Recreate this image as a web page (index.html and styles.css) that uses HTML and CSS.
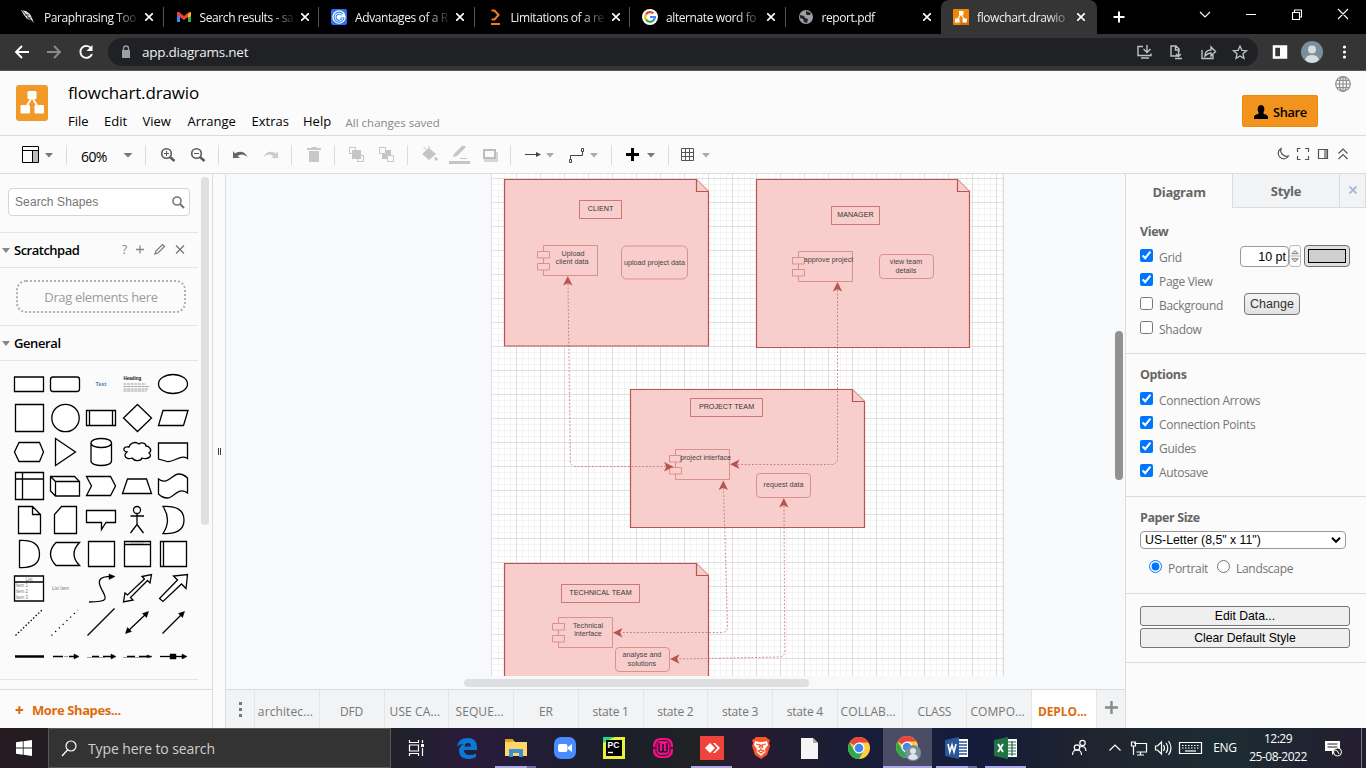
FILE: index.html
```html
<!DOCTYPE html>
<html lang="en">
<head>
<meta charset="utf-8">
<title>flowchart.drawio</title>
<link rel="stylesheet" href="styles.css">
</head>
<body>
<div class="screen">
<header class="tabstrip">
  <div class="tab"><svg class="fav" viewBox="0 0 16 16"><path d="M1 1l5 1 4 3 2 4 2 5-3-3-4-1-3-4z" fill="#ddd"/><path d="M2 1l12 14M5 6l4 0M7 9h4" stroke="#000" stroke-width=".7"/></svg><span class="tt">Paraphrasing Too</span><svg class="x" viewBox="0 0 8 8"><path d="M0 0l8 8M8 0l-8 8"/></svg></div>
  <div class="tab"><svg class="fav" viewBox="0 0 16 16"><path d="M1 3v10h3V6z" fill="#4285f4"/><path d="M15 3v10h-3V6z" fill="#34a853"/><path d="M1 3h2l5 4 5-4h2v3L8 11 1 6z" fill="#ea4335"/><path d="M12 5l3-2v4l-3 2z" fill="#fbbc04"/></svg><span class="tt">Search results - sa</span><svg class="x" viewBox="0 0 8 8"><path d="M0 0l8 8M8 0l-8 8"/></svg></div>
  <div class="tab"><svg class="fav" viewBox="0 0 16 16"><rect width="16" height="16" rx="2" fill="#2f6fed"/><circle cx="8" cy="8" r="6.700" fill="#fff"/><path d="M12 5a5 5 0 1 0 1 4H9M10.500 6.500a3 3 0 1 0 0 3.500" fill="none" stroke="#2f86ed" stroke-width="1.100"/></svg><span class="tt">Advantages of a R</span><svg class="x" viewBox="0 0 8 8"><path d="M0 0l8 8M8 0l-8 8"/></svg></div>
  <div class="tab"><svg class="fav" viewBox="0 0 16 16"><path d="M4.500 1.500h3l4 4.500-4 4.500h-3M4 15h9" fill="none" stroke="#f47b20" stroke-width="2"/></svg><span class="tt">Limitations of a re</span><svg class="x" viewBox="0 0 8 8"><path d="M0 0l8 8M8 0l-8 8"/></svg></div>
  <div class="tab"><svg class="fav" viewBox="0 0 16 16"><circle cx="8" cy="8" r="8" fill="#fff"/><g fill="none" stroke-width="2.200"><path d="M4 5.300a5 5 0 0 1 7.500-1" stroke="#ea4335"/><path d="M4 5.300a5 5 0 0 0 0 5.400" stroke="#fbbc04"/><path d="M4 10.700a5 5 0 0 0 7.300.9" stroke="#34a853"/><path d="M8 8h5a5 5 0 0 1-1.700 3.600" stroke="#4285f4"/></g></svg><span class="tt">alternate word fo</span><svg class="x" viewBox="0 0 8 8"><path d="M0 0l8 8M8 0l-8 8"/></svg></div>
  <div class="tab nosep"><svg class="fav" viewBox="0 0 16 16"><circle cx="8" cy="8" r="7" fill="#9aa0a6"/><path d="M2 6l4 1 1 2 3 1-1 4-3-1-1-3-3-1zM8 2l5 2-1 2H9L8 5z" fill="#222"/></svg><span class="tt">report.pdf</span><svg class="x" viewBox="0 0 8 8"><path d="M0 0l8 8M8 0l-8 8"/></svg></div>
  <div class="tab active"><svg class="fav" viewBox="0 0 16 16"><rect width="16" height="16" rx="1" fill="#f08705"/><path d="M10 6l6 6v4H7z" fill="#df6c0c"/><path d="M8 5L4 11M8 5l4 6" stroke="#fff" stroke-width="1.300"/><path d="M6 2h4.500v4H6zM2 9.500h4.500v4H2zM9.500 9.500H14v4H9.500z" fill="#fff"/></svg><span class="tt">flowchart.drawio</span><svg class="x" viewBox="0 0 8 8"><path d="M0 0l8 8M8 0l-8 8"/></svg></div>
  <svg class="winctl" viewBox="1097 0 269 34"><g fill="none" stroke="#fff"><path d="M1119 11.500v11M1113.500 17h11" stroke-width="2"/><path d="M1200 12l5 5 5-5M1246 14.500h10M1292.500 12.500h7v7h-7zM1294.500 12v-2h7v7h-2M1338 9l10 10M1348 9l-10 10" stroke-width="1.100"/></g></svg>
</header>
<div class="urlbar">
  <svg class="nav" viewBox="0 34 108 37"><g fill="none" stroke-width="1.900"><path d="M29 52H17M22 46l-6 6 6 6" stroke="#fff"/><path d="M47 52h12M54 46l6 6-6 6" stroke="#8a8a8a"/><path d="M91 48a6 6 0 1 0 1 6" stroke="#fff"/></g><path d="M92.500 45v6h-6z" fill="#fff"/></svg>
  <div class="omni"><svg class="lock" viewBox="0 0 10 14"><path d="M1 5h8v8H1z" fill="#9aa0a6"/><path d="M2.500 6V3.500a2.500 2.500 0 0 1 5 0V6" fill="none" stroke="#9aa0a6" stroke-width="1.300"/></svg><span>app.diagrams.net</span>
  <svg class="omniic" viewBox="1130 38 128 28"><g fill="none" stroke="#bfc1c5" stroke-width="1.400"><path d="M1143 46.500h-5v9h13v-2M1147 45v7M1143.500 49l3.500 3.500 3.500-3.500M1141 58h8"/><path d="M1178 56h-7V46h5l3 3v3M1175.500 46v4h4M1178.500 51v5M1176 54l2.500 2.500L1181 54M1175 58.500h7"/><path d="M1202 50v8.500h11V55M1205 56q0-6 6-6v-3l4.500 4.500L1211 56v-3q-3 0-6 3z"/><path d="M1240 46l1.900 4.300 4.600.4-3.500 3.100 1 4.500-4-2.400-4 2.400 1-4.500-3.500-3.100 4.600-.4z" stroke-width="1.300"/></g></svg></div>
  <svg class="barright" viewBox="1258 34 108 37"><path d="M1274 46.500h12v11h-12z" fill="none" stroke="#fff" stroke-width="2.500"/><path d="M1280 46h6v12h-6z" fill="#fff"/><circle cx="1312" cy="52" r="11" fill="#78909c"/><circle cx="1312" cy="49.500" r="4" fill="#d6dde1"/><path d="M1305 60q1-5 7-5t7 5q-3 3-7 3t-7-3z" fill="#d6dde1"/><g fill="#fff"><circle cx="1344.500" cy="47" r="1.600"/><circle cx="1344.500" cy="52" r="1.600"/><circle cx="1344.500" cy="57" r="1.600"/></g></svg>
</div>
<div class="apphead">
  <svg class="logo" viewBox="0 0 32 36"><rect width="32" height="36" rx="3" fill="#f2992b"/><path d="M16 12L9 24M16 12l7 12" stroke="#fff" stroke-width="1.800"/><rect x="11.500" y="6" width="9" height="8" rx="1.300" fill="#fff"/><rect x="4.500" y="20" width="9.500" height="8.500" rx="1.300" fill="#fff"/><rect x="18.500" y="20" width="9.500" height="8.500" rx="1.300" fill="#fff"/></svg>
  <div class="names"><div class="fname">flowchart.drawio</div>
  <nav class="menu"><span class="m1">File</span><span class="m2">Edit</span><span class="m3">View</span><span class="m4">Arrange</span><span class="m5">Extras</span><span class="m6">Help</span><span class="saved">All changes saved</span></nav></div>
  <div class="share"><svg viewBox="0 0 14 14"><path d="M0 14v-2q0-2 4-3 1-.5.500-1.500Q3 5 4 2q1-2 3-2t3 2q1 3-.5 5.500Q9 8.500 10 9q4 1 4 3v2z"/></svg>Share</div>
  <svg class="globe" viewBox="0 0 16 16"><g fill="none" stroke="#8f8f8f" stroke-width="1.200"><circle cx="8" cy="8" r="7.300"/><ellipse cx="8" cy="8" rx="3.600" ry="7.300"/><path d="M8 .7v14.600M.7 8h14.600M1.800 4.300h12.400M1.800 11.700h12.400"/></g></svg>
</div>
<div class="toolbar">
  <div class="tg w67"><svg width="66" height="37" viewBox="0 136 66 37"><path d="M22.500 146.500h16v16h-16zM22 150.500h16M32.500 150.500v12" fill="none" stroke="#000"/><path d="M33 151h5v11h-5z" fill="#bbb"/><path d="M45 153h8l-4 4.500z" fill="#777"/></svg></div>
  <div class="tg w79"><span class="zoom">60%</span><svg width="10" height="6" viewBox="0 0 10 6"><path d="M.5 1h9L5 5.500z" fill="#777"/></svg></div>
  <div class="tg w73"><svg width="72" height="37" viewBox="146 136 72 37"><g fill="none" stroke="#5a5a5a"><circle cx="166.500" cy="153.500" r="4.800" stroke-width="1.600"/><path d="M170 157l4.500 4" stroke-width="2.400"/><path d="M164 153.500h5M166.500 151v5"/><circle cx="196.500" cy="153.500" r="4.800" stroke-width="1.600"/><path d="M200 157l4.500 4" stroke-width="2.400"/><path d="M194 153.500h5"/></g></svg></div>
  <div class="tg w73"><svg width="72" height="37" viewBox="219 136 72 37"><path d="M233 151v7h7l-2.500-2q5-3.500 10 1-3-6-9-5-2 .3-3.500 1.500z" fill="#666"/><path d="M278 151v7h-7l2.500-2q-5-3.500-10 1 3-6 9-5 2 .3 3.500 1.500z" fill="#ccc"/></svg></div>
  <div class="tg w43"><svg width="42" height="37" viewBox="292 136 42 37"><path d="M307 148h4.500v-1h5v1h4.500v2h-14zM309 151h10v11h-10z" fill="#c8c8c8"/></svg></div>
  <div class="tg w73"><svg width="72" height="37" viewBox="335 136 72 37"><g fill="none" stroke="#c5c5c5"><path d="M349.500 147.500h6v6h-6zM357.500 155.500h6v6h-6zM379.500 147.500h6v6h-6zM387.500 155.500h6v6h-6z"/></g><path d="M352 150h9v9h-9z" fill="#c5c5c5"/><path d="M386 150h5v5h-5zM382 154h5v5h-5z" fill="#c5c5c5"/></svg></div>
  <div class="tg w103"><svg width="102" height="37" viewBox="408 136 102 37"><g fill="#c5c5c5"><path d="M422 154l7-6 7 6-7 6zM434 158q3-2 4 1-1 3-3 1z"/><path d="M423.500 147l6 6M429 146v7" stroke="#c5c5c5"/><path d="M449 161h21v3h-21zM453 157l1-3 8-8q2-1 4 1l-9 9zM460 158h7v1h-7z"/><path d="M487 152h11v10h-14v-3h3z" opacity=".7"/></g><path d="M484 150h11v8h-11z" fill="#fafafa" stroke="#bdbdbd" stroke-width="2"/></svg></div>
  <div class="tg w101"><svg width="100" height="37" viewBox="511 136 100 37"><g fill="none" stroke="#444"><path d="M525 154.500h13M570.500 160.500v-5h12v-5"/><path d="M569.500 159.500h2v3h-2zM581.500 148.500h2v3h-2z" fill="#fff"/></g><path d="M536 152l5 2.500-5 2.500z" fill="#444"/><path d="M546 153h8l-4 4.500zM590 153h8l-4 4.500z" fill="#aaa"/></svg></div>
  <div class="tg w57"><svg width="56" height="37" viewBox="612 136 56 37"><path d="M632.500 148v13M626 154.500h13" stroke="#000" stroke-width="3"/><path d="M647 153h8l-4 4.500z" fill="#777"/></svg></div>
  <div class="tg last"><svg width="60" height="37" viewBox="669 136 60 37"><path d="M681.500 148.500h12v12h-12zM685.500 148v13M689.500 148v13M681 152.500h13M681 156.500h13" fill="none" stroke="#555"/><path d="M702 153h8l-4 4.500z" fill="#aaa"/></svg></div>
  <svg class="tr" width="96" height="37" viewBox="1270 136 96 37"><g fill="none" stroke="#555" stroke-width="1.200"><path d="M1281 148.500a5.500 5.500 0 1 0 7.500 7.500 6 6 0 0 1-7.500-7.500z"/><path d="M1297.500 152v-3.500h3M1305 148.500h3.500v3.500M1308.500 156v3.500h-3.500M1300.500 159.500h-3v-3.500M1318.500 149.500h9v9h-9zM1325 150v9"/><path d="M1338.500 153.500l4.500-4.500 4.500 4.500M1338.500 159l4.500-4.500 4.500 4.500"/></g><path d="M1325 150h2v8h-2z" fill="#999"/></svg>
</div>
<main class="work">
  <aside class="side">
    <div class="sidescroll">
      <div class="searchwrap"><div class="search">Search Shapes<svg width="13" height="13" viewBox="0 0 13 13"><circle cx="5" cy="5" r="4" fill="none" stroke="#777" stroke-width="1.600"/><path d="M8 8l4 4" stroke="#777" stroke-width="2.200"/></svg></div></div>
      <div class="sec"><i class="tri"></i><span class="scr">Scratchpad</span><svg width="68" height="16" viewBox="120 243 68 16"><text x="122" y="255" class="q">?</text><path d="M136 250.500h8M140 246.500v8" stroke="#888" stroke-width="1.300"/><path d="M155 255l1-3 6.500-6.500 2 2L158 254z" fill="none" stroke="#777" stroke-width="1.200"/><path d="M176 246.500l8 8M184 246.500l-8 8" stroke="#777" stroke-width="1.300"/></svg></div>
      <div class="dragwrap"><div class="drag"><svg width="170" height="33" viewBox="0 0 170 33"><rect x="1" y="1" width="168" height="31" rx="9" fill="none" stroke="#b0b0b0" stroke-width="2" stroke-dasharray="2 2"/></svg><span>Drag elements here</span></div></div>
      <div class="sec gen"><i class="tri"></i><span>General</span></div>
      <div class="palette">
        <svg viewBox="0 0 36 34"><path d="M3.500 10h29v14.500h-29z"/></svg>
        <svg viewBox="0 0 36 34"><rect x="3.500" y="10" width="29" height="14.500" rx="2.500"/></svg>
        <svg viewBox="0 0 36 34"><text x="18" y="19" class="mini blue" text-anchor="middle">Text</text></svg>
        <svg viewBox="0 0 36 34"><text x="4.500" y="13" class="mini navy">Heading</text><path class="thin" d="M4.500 17h22M4.500 19.500h26M4.500 22h25M4.500 24h23" stroke-dasharray="3 .6"/></svg>
        <svg viewBox="0 0 36 34"><ellipse cx="18" cy="17" rx="14.500" ry="9.500"/></svg>
        <svg viewBox="0 0 36 34"><path d="M4.500 3.500h28v27h-28z"/></svg>
        <svg viewBox="0 0 36 34"><circle cx="18.500" cy="17" r="13.700"/></svg>
        <svg viewBox="0 0 36 34"><path d="M3.500 9.500h29v15h-29zM6.500 9.500v15M29.500 9.500v15"/></svg>
        <svg viewBox="0 0 36 34"><path d="M18.500 3.500l14 13.500-14 13.500L4.500 17z"/></svg>
        <svg viewBox="0 0 36 34"><path d="M8 9.500h25l-4.500 15h-25z"/></svg>
        <svg viewBox="0 0 36 34"><path d="M8 7.500h20.500l4 9.500-4 9.500H8L3.500 17z"/></svg>
        <svg viewBox="0 0 36 34"><path d="M8.500 3.500L28.500 17l-20 13.500z"/></svg>
        <svg viewBox="0 0 36 34"><path d="M8 8v18c0 6 20.500 6 20.500 0V8c0-6-20.500-6-20.500 0s20.500 6 20.500 0"/></svg>
        <svg viewBox="0 0 36 34"><path d="M10 12C4 11 3 16 8 17c-5 4 0 8 5 6 3 4 9 3 10 0 6 2 11-2 7-5 4-3 0-7-3-7 0-3-5-4-7-2-4-3-9-1-10 3z"/></svg>
        <svg viewBox="0 0 36 34"><path d="M3.500 8h29v15.500c-8-5-15 6-22 2.500L3.500 24z"/></svg>
        <svg viewBox="0 0 36 34"><path d="M4.500 3.500h28v27h-28zM4.500 10h28M11.500 3.500v27"/></svg>
        <svg viewBox="0 0 36 34"><path d="M3.500 7.500h24l5 5v14.500h-24l-5-5zM3.500 7.500l5 5h24M8.500 12.500V27"/></svg>
        <svg viewBox="0 0 36 34"><path d="M3.500 7.500h24l5 9.500-5 9.500h-24l5-9.500z"/></svg>
        <svg viewBox="0 0 36 34"><path d="M8.500 10h19l5 14.500h-29z"/></svg>
        <svg viewBox="0 0 36 34"><path d="M3.500 10c9 7 14-5 20-5 4 0 6 1 9 4v15c-9-7-14 5-20 5-4 0-6-1-9-4z"/></svg>
        <svg viewBox="0 0 36 34"><path d="M7.500 3.500h14l8 8v19h-22zM21.500 3.500v8h8"/></svg>
        <svg viewBox="0 0 36 34"><path d="M14.500 3.500h15v27h-22v-19z"/></svg>
        <svg viewBox="0 0 36 34"><path d="M3.500 7.500h29v12H23l-4.500 7v-7h-15z"/></svg>
        <svg viewBox="0 0 36 34"><circle cx="18" cy="7" r="3.500"/><path d="M18 10.500v11L11.500 30M18 21.500L24.500 30M11.500 13h13.500"/></svg>
        <svg viewBox="0 0 36 34"><path d="M8 3.500q21-1 21 13.500T8 30.500q9-13.500 0-27z"/></svg>
        <svg viewBox="0 0 36 34"><path d="M8.500 3.500q20-1 20 13.500t-20 13.500z"/></svg>
        <svg viewBox="0 0 36 34"><path d="M9 5.500h23.500q-11 11.500 0 23H9q-11-11.500 0-23z"/></svg>
        <svg viewBox="0 0 36 34"><path d="M5.500 4.500h26v25h-26z"/></svg>
        <svg viewBox="0 0 36 34"><path d="M5.500 4.500h26v25h-26zM5.500 7.500h26"/><path class="thin" d="M12 6h13" stroke-dasharray="2 .6"/></svg>
        <svg viewBox="0 0 36 34"><path d="M5.500 4.500h26v25h-26zM8.500 4.500v25"/></svg>
        <svg viewBox="0 0 36 34"><path d="M3.500 5h29v25h-29zM3.500 11h29"/><text x="18" y="9.500" class="mini" text-anchor="middle">List</text><text x="4.500" y="15.500" class="mini">Item 1</text><text x="4.500" y="21.500" class="mini">Item 2</text><text x="4.500" y="27.500" class="mini">Item 3</text></svg>
        <svg viewBox="0 0 36 34"><text x="5" y="19" class="mini">List Item</text></svg>
        <svg viewBox="0 0 36 34"><path class="nf" d="M6 31c20 0 18-3 13-12S15 5 30 5.500"/><path class="f" d="M26 3l6 2.500-6 3z"/></svg>
        <svg viewBox="0 0 36 34"><path d="M4.500 31l1.500-9 2.500 2L25.500 8 23 5.500 32.500 3.500 31 12l-2.500-2.500-17 17 2.500 2.500z"/></svg>
        <svg viewBox="0 0 36 34"><path d="M4.500 27.500L22.500 9l-4-4 14-1.500-1.500 14-4.500-4.500L8 30.500z"/></svg>
        <svg viewBox="0 0 36 34"><path class="dot" d="M4.500 30.500l27-26"/></svg>
        <svg viewBox="0 0 36 34"><path class="dot2" d="M4.500 30.500L31 5"/></svg>
        <svg viewBox="0 0 36 34"><path d="M4.500 30.500l27-27"/></svg>
        <svg viewBox="0 0 36 34"><path d="M8 27L28 8"/><path class="f" d="M29.500 6.500l-2 6-4-4zM6.500 28.500l6-2-4-4z"/></svg>
        <svg viewBox="0 0 36 34"><path d="M7.500 28.500L28 8"/><path class="f" d="M29.500 6.500l-2 6-4-4z"/></svg>
        <svg viewBox="0 0 36 34"><path class="thick" d="M4 17.500h29"/></svg>
        <svg viewBox="0 0 36 34"><path d="M6 17.500h10M22 17.500h8"/><path class="f" d="M27 15l5 2.500-5 2.500z"/><path class="thin" d="M17 17.500h4"/></svg>
        <svg viewBox="0 0 36 34"><path d="M9 17.500h7M20 17.500h11"/><path class="f" d="M28 15l5 2.500-5 2.500z"/><path class="thin" d="M4 18.500h18"/></svg>
        <svg viewBox="0 0 36 34"><path d="M8 17.500h8M20 17.500h8"/><path class="f" d="M28 16l5 1.500-5 1.500z"/><path class="thin" d="M4 18.500h28"/></svg>
        <svg viewBox="0 0 36 34"><path d="M5 17.500h25"/><path class="f" d="M15 15h6v5h-6zM27 15l5 2.500-5 2.500z"/></svg>
      </div>
      <div class="thumb"></div>
    </div>
    <div class="more"><b>+</b>More Shapes...</div>
  </aside>
  <div class="splitter"><i></i><i></i></div>
  <section class="center">
    <svg class="canvas" width="899" height="502" viewBox="226 174 899 502">
      <defs>
        <pattern id="grid" x="516" y="178" width="24" height="24" patternUnits="userSpaceOnUse"><path d="M6.500 0v24M12.500 0v24M18.500 0v24M0 6.500h24M0 12.500h24M0 18.500h24" stroke="#f3f3f3" fill="none"/><path d="M.5 0v24M0 .5h24" stroke="#dfdfdf" fill="none"/></pattern>
        <g id="comp"><path d="M0 0h54v30H0z"/><path d="M-6 6H6v6.500H-6zM-6 18H6v6.500H-6z" /></g>
        <path id="head" d="M0 0l-4.700 9.500L0 7.200l4.700 2.300z"/>
      </defs>
      <path d="M491.500 173.500h512v503h-512z" fill="#fff" stroke="#dcdde0"/><path d="M493 174h510v502H493z" fill="url(#grid)"/>
      <g class="note"><path d="M504.500 179.500h192l12 12v154.500h-204z"/><path d="M696.500 179.500v12h12"/><path d="M756.500 179.500h201l12 12v156h-213z"/><path d="M957.500 179.500v12h12"/><path d="M630.500 389.500h222l12 12v126h-234z"/><path d="M852.500 389.500v12h12"/><path d="M504.500 563.500h192l12 12v110h-204z"/><path d="M696.500 563.500v12h12"/></g>
      <g class="box"><path d="M579.500 200.500h42v18h-42zM831.500 206.500h48v18h-48zM690.500 398.500h72v18h-72zM561.500 584.500h78v18h-78z"/></g>
      <g class="soft"><use href="#comp" x="543.500" y="245.500"/><use href="#comp" x="798.500" y="251.500"/><use href="#comp" x="675.500" y="449.500"/><use href="#comp" x="558.500" y="617.500"/><rect x="621.500" y="246" width="66" height="33" rx="5"/><rect x="879.500" y="254.500" width="54" height="24" rx="3.600"/><rect x="756.500" y="473.500" width="54" height="24" rx="3.600"/><rect x="615.500" y="647.500" width="54" height="24" rx="3.600"/></g>
      <g class="edge"><path d="M568 284l2.300 176q0 6.500 6 6.500H666"/><path d="M837.500 290v168q0 6.500-6 6.500H738"/><path d="M723.500 488l4 138q0 6.500-6 6.500H621"/><path d="M784 506l.8 145q0 6-6 6L678 659"/></g>
      <g fill="#b85450"><use href="#head" transform="translate(567.800 276)"/><use href="#head" transform="translate(673.500 466.700) rotate(90)"/><use href="#head" transform="translate(837.500 282)"/><use href="#head" transform="translate(730 464.300) rotate(-90)"/><use href="#head" transform="translate(723.300 480.500)"/><use href="#head" transform="translate(613 632.700) rotate(-90)"/><use href="#head" transform="translate(783.800 498)"/><use href="#head" transform="translate(670 659) rotate(-90)"/></g>
      <g class="lbl"><text x="600.500" y="211">CLIENT</text><text x="855.500" y="217">MANAGER</text><text x="726.500" y="409">PROJECT TEAM</text><text x="600.500" y="595">TECHNICAL TEAM</text><g class="sm"><text x="573" y="256">Upload</text><text x="572" y="264">client data</text><text x="654.500" y="265">upload project data</text><text x="828.500" y="262">approve project</text><text x="906" y="264">view team</text><text x="906" y="273">details</text><text x="705.500" y="460">project interface</text><text x="783.500" y="487">request data</text><text x="588" y="628">Technical</text><text x="588" y="636">interface</text><text x="642" y="657">analyse and</text><text x="642" y="666">solutions</text></g></g>
      <rect x="1115" y="331" width="8" height="149" rx="4" fill="#919191"/>
    </svg>
    <div class="hscroll"><i></i></div>
    <div class="pages"><span class="pm"><i></i><i></i><i></i></span><span class="el">architec...</span><span>DFD</span><span class="el">USE CA...</span><span class="el">SEQUE...</span><span>ER</span><span>state 1</span><span>state 2</span><span>state 3</span><span>state 4</span><span class="el">COLLAB...</span><span>CLASS</span><span class="el">COMPO...</span><span class="on">DEPLO...</span><span class="pp"><svg width="13" height="13" viewBox="0 0 13 13"><path d="M6.500 0v13M0 6.500h13" stroke="#8a8a8a" stroke-width="2.400"/></svg></span></div>
  </section>
  <aside class="format">
    <div class="ftabs"><span class="fa">Diagram</span><span class="fb">Style</span><span class="fc"><svg width="8" height="8" viewBox="0 0 8 8"><path d="M.5.5l7 7M7.500.5l-7 7" stroke="#aab9d3" stroke-width="1.900"/></svg></span></div>
    <div class="fs s1"><h4>View</h4>
      <div class="row"><input type="checkbox" checked><label>Grid</label><span class="num">10 pt</span><span class="spin"><svg width="10" height="20" viewBox="0 0 11 20"><path d="M0 10h11" stroke="#aaa"/><path d="M2 7.500h7L5.500 4zM2 13h7l-3.500 3.500z" fill="#ddd" stroke="#777"/></svg></span><span class="color"><i></i></span></div>
      <div class="row"><input type="checkbox" checked><label>Page View</label></div>
      <div class="row"><input type="checkbox"><label>Background</label><span class="change">Change</span></div>
      <div class="row"><input type="checkbox"><label>Shadow</label></div></div>
    <div class="fs s2"><h4>Options</h4>
      <div class="row"><input type="checkbox" checked><label>Connection Arrows</label></div>
      <div class="row"><input type="checkbox" checked><label>Connection Points</label></div>
      <div class="row"><input type="checkbox" checked><label>Guides</label></div>
      <div class="row"><input type="checkbox" checked><label>Autosave</label></div></div>
    <div class="fs s3"><h4>Paper Size</h4>
      <div class="select">US-Letter (8,5" x 11")<svg width="10" height="6" viewBox="0 0 10 6"><path d="M1 .8l4 4 4-4" fill="none" stroke="#000" stroke-width="2"/></svg></div>
      <div class="radios"><input type="radio" name="o" checked><label class="po">Portrait</label><input type="radio" name="o"><label>Landscape</label></div></div>
    <div class="fs s4"><div class="btn">Edit Data...</div><div class="btn">Clear Default Style</div></div>
  </aside>
</main>
<footer class="taskbar">
  <span class="start"><svg width="16" height="16" viewBox="0 0 16 16"><path d="M0 2.300l6.800-1v6.300H0zM7.600 1.200L16 0v7.600H7.600zM0 8.400h6.800v6.300L0 13.700zM7.600 8.400H16V16l-8.400-1.200z" fill="#fff"/></svg></span>
  <div class="tsearch"><svg width="17" height="17" viewBox="0 0 17 17"><circle cx="10" cy="6" r="5" fill="none" stroke="#fff" stroke-width="1.200"/><path d="M6.500 10L1 16" stroke="#fff" stroke-width="1.300"/></svg>Type here to search</div>
  <span class="tv"><svg width="18" height="16" viewBox="0 0 18 16"><path d="M1.500 0v2.500h9V0M1.500 5h9v6h-9zM1.500 16v-2.500h9V16M14.500 0v3M14.500 8v8" fill="none" stroke="#fff" stroke-width="1.200"/><path d="M13 4h3v3h-3z" fill="#fff"/></svg></span>
  <span class="app"><svg width="22" height="22" viewBox="0 0 22 22"><path d="M1 10Q2 1 11.500 1 21 1 21 10v3H8q0 5 6 5 3 0 6-1.500V20q-3 2-8 2Q3 21 3 14q0-5 5-7Q3 7 1 10zm7.500-.5H15Q15 6 12 6T8.500 9.500z" fill="#0a78d4"/></svg></span>
  <span class="app ul dual"><svg width="22" height="20" viewBox="0 0 22 20"><path d="M0 2h8l2 2h12v14H0z" fill="#ffd567"/><path d="M0 1h8v3H0z" fill="#e5a01c"/><path d="M4 19v-8h14v8h-4v-4H8v4z" fill="#3b91d0"/></svg></span>
  <span class="app"><svg width="22" height="22" viewBox="0 0 22 22"><rect width="22" height="22" rx="7" fill="#4a8cff"/><rect x="4" y="7" width="9.500" height="8" rx="2" fill="#fff"/><path d="M14 10l4-3v8l-4-3z" fill="#fff"/></svg></span>
  <span class="app"><svg width="22" height="22" viewBox="0 0 22 22"><path d="M0 0h11l11 8v14H0z" fill="#21d789"/><path d="M0 6v16h22V0H12z" fill="#e9f238"/><path d="M3 3h16v16H3z"/><text x="4.500" y="11" class="pc">PC</text><path d="M5 15.500h5" stroke="#fff" stroke-width="1.400"/></svg></span>
  <span class="app"><svg width="22" height="22" viewBox="0 0 22 22"><rect x="1" y="1" width="20" height="20" rx="7" fill="#f70b86"/><path d="M0 11h4M18 11h4" stroke="#1c1927" stroke-width="1.300"/><rect x="4" y="3.500" width="14" height="15" rx="5" fill="none" stroke="#1c1927"/><path d="M7 6v7q0 2 2 2 2 0 2-2V7v6q0 2 2 2 2 0 2-2V6" fill="none" stroke="#1c1927" stroke-width="1.500"/></svg></span>
  <span class="app ul"><svg width="24" height="24" viewBox="0 0 24 24"><path d="M0 0h24v24H0z" fill="#ef443b"/><path d="M5 12l5-5 5 5-5 5zM13 7l2 0 5 5-5 5h-2l4.500-5z" fill="#fff"/></svg></span>
  <span class="app"><svg width="20" height="24" viewBox="0 0 20 24"><path d="M5 1h10l2 2 2 1-1 3 1 3-3 9-6 4-6-4-3-9 1-3-1-3 2-1z" fill="#fb542b"/><path d="M4 5l4 1h4l4-1 1 4-3 4 .5 3L10 20l-4.500-4L6 13 3 9z" fill="#fff"/><path d="M5 8l4 1-1 3M15 8l-4 1 1 3M10 9v5M7 15l3-1 3 1-3 2z" stroke="#fb542b" fill="none" stroke-width="1.200"/></svg></span>
  <span class="app"><svg width="17" height="21" viewBox="0 0 17 21"><path d="M0 0h12l5 5v16H0z" fill="#f5f5f5"/><path d="M12 0v5h5z" fill="#aaa"/></svg></span>
  <span class="app"><svg width="22" height="22" viewBox="0 0 22 22"><g id="chr"><circle cx="11" cy="11" r="11" fill="#fc4"/><path d="M11 11L1.500 5.500A11 11 0 0 1 20.500 5.500H11z" fill="#e8453c"/><path d="M1.500 5.500A11 11 0 0 0 11 22l4.800-8.300-9.500 0z" fill="#2ca94f"/><circle cx="11" cy="11" r="5.500" fill="#fff"/><circle cx="11" cy="11" r="4.300" fill="#4285f4"/></g></svg></span>
  <span class="app cur"><svg width="26" height="28" viewBox="0 0 26 28"><use href="#chr" x="1" y="2"/><circle cx="18" cy="19" r="8" fill="#78909c"/><circle cx="18" cy="17" r="3" fill="#dfe5e8"/><path d="M13 24q1-4 5-4t5 4q-5 4-10 0z" fill="#dfe5e8"/></svg></span>
  <span class="app ul dual"><svg width="24" height="22" viewBox="0 0 24 22"><path d="M12 2h11v18H12z" fill="#fff"/><path d="M14 5h8M14 8h8M14 11h8M14 14h8M14 17h8" stroke="#2b579a" stroke-width="1.300"/><path d="M0 3l14-3v22L0 19z" fill="#2b579a"/><path d="M3 7l1.800 8L7 8l2 7 2-8" fill="none" stroke="#fff" stroke-width="1.600"/></svg></span>
  <span class="app ul"><svg width="24" height="22" viewBox="0 0 24 22"><path d="M12 2h11v18H12z" fill="#fff"/><path d="M14 5h8M14 8h8M14 11h8M14 14h8M14 17h8M18 4v15" stroke="#217346" stroke-width="1.200"/><path d="M0 3l14-3v22L0 19z" fill="#217346"/><path d="M4 7l5 8M9 7l-5 8" stroke="#fff" stroke-width="1.900"/></svg></span>
  <svg class="tray" width="175" height="40" viewBox="1030 728 175 40"><g fill="none" stroke="#fff" stroke-width="1.200"><circle cx="1077" cy="747.500" r="2.700"/><path d="M1072.500 755q0-5 4.500-5t4.500 5"/><circle cx="1082.500" cy="743" r="2.700"/><path d="M1079.500 747q6-2 6.500 4"/><path d="M1109.500 750.500l5.500-5.500 5.500 5.500M1134 743.500h12.500v8.500h-10M1140.500 752v3M1137 755h7M1131.500 742h4v4h-4zM1133.500 746v9"/><path d="M1155.500 746h2l4-4v12l-4-4h-2zM1163.500 745q2 3 0 6M1166 743q3.500 5 0 10M1168.500 741q5 7 0 14"/><path d="M1179.500 742.500h22v11h-22z"/><path d="M1182 745.500h17.500M1182 748h17.500" stroke-dasharray="1.500 1.500"/><path d="M1185 751h11"/></g></svg>
  <span class="eng">ENG</span><span class="clock"><span>12:29</span><span>25-08-2022</span></span>
  <svg class="notif" width="55" height="40" viewBox="1311 728 55 40"><path d="M1325 741h15v10h-4l-4 4v-4h-7z" fill="#fff"/><path d="M1327.500 744h10M1327.500 747h10" stroke="#222"/><circle cx="1337.500" cy="752" r="4" fill="#222" stroke="#fff"/><path d="M1335 750q3 0 4 4" stroke="#fff" fill="none"/><path d="M1361.500 728v40" stroke="#777"/></svg>
</footer>
</div>
</body>
</html>
```
FILE: styles.css
```css
*{box-sizing:border-box}
body{margin:0;font-family:"Open Sans","Noto Sans",sans-serif;color:#000}
.screen{width:1366px;height:768px;display:flex;flex-direction:column;overflow:hidden;background:#fbfbfb}
svg{display:block;flex:none}
.tabstrip{height:34px;background:#000;display:flex;padding-left:8px;flex:none}
.tab{width:155.500px;height:34px;display:flex;align-items:center;padding-left:12px;color:#f1f1f1;font-size:12px;letter-spacing:-.4px;background:linear-gradient(#555,#555) right center/1px 20px no-repeat;flex:none}
.tab.nosep{background:none}
.tab.active{background:#353535;border-radius:8px 8px 0 0;width:156px}
.fav{width:16px;height:16px;margin-right:8px}
.tt{width:98px;white-space:nowrap;-webkit-mask-image:linear-gradient(90deg,#000 72%,transparent 98%)}
.x{width:8px;height:8px;margin-left:3px}
.active .x{margin-left:2px}
.x path{stroke:#fff;stroke-width:1.600}
.winctl{width:269px;height:34px}
.urlbar{height:37px;background:#353535;border-bottom:1px solid #555;display:flex;flex:none}
.nav{width:108px;height:37px}
.omni{width:1150px;height:28px;margin-top:4px;background:#202124;border-radius:14px;display:flex;align-items:center;padding-left:13px;color:#eee;font-size:13.500px;letter-spacing:-.25px}
.lock{width:10px;height:14px;margin-right:11px}
.omniic{width:128px;height:28px;margin-left:auto}
.barright{width:108px;height:37px}
.apphead{height:65px;border-bottom:1px solid #dadce0;display:flex;flex:none;padding-left:16px}
.logo{width:32px;height:36px;margin-top:14px}
.names{width:1194px;padding:9px 0 0 20px}
.fname{font-size:17px;line-height:26px;letter-spacing:-.15px}
.menu{display:flex;font-size:13px;line-height:20px;margin-top:5px;letter-spacing:0}
.m1{width:36px}.m2{width:38.500px}.m3{width:45px}.m4{width:64px}.m5{width:51.500px}.m6{width:42.500px}
.saved{color:#888;font-size:11.500px;line-height:23px}
.share{width:76px;height:32px;margin-top:24px;border:1px solid #f08705;background:#f2931e;border-radius:2px;display:flex;align-items:center;padding:2px 0 0 11px;font-size:12.800px;font-weight:600;letter-spacing:-.35px;flex:none}
.share svg{width:14px;height:14px;margin-right:5px}
.globe{width:16px;height:16px;margin:5px 0 0 17px}
.toolbar{height:38px;border-bottom:1px solid #dadce0;display:flex;flex:none}
.tg{height:37px;display:flex;align-items:center;background:linear-gradient(#dadce0,#dadce0) right 9px/1px 20px no-repeat;flex:none}
.tg.last{background:none}
.w67{width:67px}.w79{width:79px;padding-left:14px}.w73{width:73px}.w43{width:43px}.w103{width:103px}.w101{width:101px}.w57{width:57px}
.zoom{font-size:14px;letter-spacing:-.6px;width:42px;padding-top:4px}
.tr{margin-left:auto}
.work{height:554px;display:flex;flex:none}
.side{width:213px;border-right:1px solid #dadce0;flex:none}
.sidescroll{height:516px;border-bottom:1px solid #dadce0;position:relative}
.searchwrap{height:59px;width:198px;border-bottom:1px solid #e5e5e5;padding:14px 0 0 8px}
.search{width:182px;height:28px;border:1px solid #d5d5d5;border-radius:4px;background:#fff;display:flex;align-items:center;justify-content:space-between;padding:0 4px 0 6px;font:12px "Liberation Sans",Arial,sans-serif;color:#757575;letter-spacing:.1px}
.sec{height:35px;width:198px;border-bottom:1px solid #e5e5e5;display:flex;align-items:center;font-size:13px;font-weight:600;letter-spacing:-.5px}
.sec svg{margin-left:auto;margin-right:10px}
.gen{letter-spacing:-.4px}
.q{font:12px "Open Sans",sans-serif;fill:#888}
.tri{border:4px solid transparent;border-top:5px solid #888;border-bottom:0;margin:0 4px 0 2px}
.dragwrap{height:58px;width:198px;border-bottom:1px solid #e5e5e5;padding:12px 0 0 16px}
.drag{display:grid;width:170px;height:33px}
.drag>*{grid-area:1/1}
.drag span{text-align:center;line-height:34px;font-size:13px;color:#9c9c9c;letter-spacing:-.35px}
.drag span{letter-spacing:-.35px}
.palette{display:grid;grid-template-columns:repeat(5,36px);padding:6px 0 0 10.500px;width:198px;height:319px;border-bottom:1px solid #e5e5e5;align-content:start}
.palette svg{width:36px;height:34px;fill:#fff;stroke:#000;stroke-width:1.300}
.mini{font:4.500px "Liberation Sans",sans-serif;stroke:none;fill:#777}
.blue{fill:#557fb5;font-size:5.500px;font-weight:bold}.navy{fill:#111;font-weight:bold}
.palette .thin{stroke:#666;stroke-width:.6}.palette .f{fill:#000;stroke-width:.5}.palette .nf{fill:none}
.palette .dot{stroke-dasharray:1.500 2}.palette .dot2{stroke-dasharray:1.200 4}.palette .thick{stroke-width:2.500}
.thumb{position:absolute;right:3px;top:3px;width:8px;height:348px;border-radius:4px;background:#e0e0e0}
.more{height:38px;padding:2px 0 0 15px;display:flex;align-items:center;color:#df6c0c;font-size:13px;font-weight:700;letter-spacing:-.4px}
.more b{width:17px;font-size:15px}
.splitter{width:13px;border-right:1px solid #dadce0;display:flex;align-items:center;justify-content:center;gap:1px;padding-left:1px;flex:none}
.splitter i{width:1px;height:7px;background:#444}
.center{width:899px;flex:none}
.canvas{background:#f8f9fb}
.note{fill:#f8cecc;stroke:#b85450;stroke-width:1.200}
.box{fill:none;stroke:#b85450;stroke-opacity:.7}
.soft{fill:#f8cecc;stroke:#d9918d}
.edge{fill:none;stroke:#b85450;stroke-opacity:.65;stroke-dasharray:1.800 1.800}
.lbl{font:7.200px "Liberation Sans",Arial,sans-serif;text-anchor:middle;fill:#333}
.sm{font-size:7.200px;fill:#444}
.hscroll{height:13px;background:#f8f9fb;padding:3px 0 0 238px}
.hscroll i{display:block;width:345px;height:8px;border-radius:4px;background:#dedfe1}
.pages{height:39px;border-top:1px solid #dadce0;background:#f1f3f4;display:flex;color:#777;font-size:12px;letter-spacing:-.2px}
.pages span{width:64.750px;border-right:1px solid #e5e6e8;display:flex;align-items:center;justify-content:center;padding-top:5px;white-space:nowrap;flex:none}
.pages .el{letter-spacing:.1px;padding-right:3px}
.pages .pm{width:29px;flex-direction:column;gap:3px;padding-top:0}
.pm i{width:3px;height:3px;background:#777}
.pages .pp{width:28px;border:0;padding:0 0 3px 1px}
.pages .on{background:#fff;color:#df6c0c;font-weight:700;letter-spacing:-.1px;padding-right:3px}
.format{width:241px;border-left:1px solid #dadce0;color:#666;flex:none}
.ftabs{display:flex;height:34px;font-size:13px;font-weight:700;letter-spacing:-.3px}
.ftabs span{display:flex;align-items:center;justify-content:center}
.fa{width:106px;padding-top:2px}
.fb{width:108px;background:#f1f3f4;border:solid #dadce0;border-width:0 1px 1px 1px}
.fc{width:26px;background:#f1f3f4;border:solid #dadce0;border-width:0 1px 1px 0;padding-bottom:1px}
.fs{border-bottom:1px solid #dadce0;padding-left:14px;font-size:12px}
.fs h4{margin:0;font-size:12.500px;font-weight:700;line-height:22px;height:22px;letter-spacing:-.4px;color:#666}
.s1{height:146px;padding-top:13px}.s2{height:143px;padding-top:10px}.s3{height:97px;padding-top:10px}.s4{height:69px;padding-top:12px}
.s1 h4{margin-bottom:1px}.s2 h4{margin-bottom:1px}
.row{display:flex;height:24px;align-items:center}
.row input{width:13px;height:13px;margin:0 6px 2px 0}
.row label{width:85px;white-space:nowrap;color:#757575;padding-top:2px;letter-spacing:-.32px}
.row .num{width:49px;height:21px;border:1px solid #999;border-radius:4px;background:#fff;color:#000;font:12.500px "Liberation Sans",Arial,sans-serif;line-height:20px;text-align:right;padding-right:2px;margin-left:-4px}
.spin{border:1px solid #bbb;border-radius:3px;margin-left:0}
.color{width:46px;height:22px;border:1px solid #707070;border-radius:4px;background:#e0e0e0;padding:3px;margin-left:3px}
.color i{display:block;height:14px;border:1px solid #000;background:#d0d0d0}
.change{width:56px;height:22px;border:1px solid #777;border-radius:4px;background:linear-gradient(#f5f5f5,#e1e1e1);color:#333;font:12.500px "Liberation Sans",Arial,sans-serif;line-height:20px;text-align:center}
.select{margin-top:2px;width:206px;height:18px;border:1px solid #999;border-radius:4px;background:#fff;display:flex;align-items:center;justify-content:space-between;padding:0 4px;color:#000;font:12.300px "Liberation Sans",Arial,sans-serif}
.radios{display:flex;align-items:center;height:36px;padding-left:9px;color:#757575;letter-spacing:-.3px}
.radios input{margin:0 6px 2px 0}.radios label{padding-top:3px}.po{width:49px}
.btn{width:210px;height:20px;border:1px solid #777;border-radius:3px;background:#efefef;color:#000;font:12.200px "Liberation Sans",Arial,sans-serif;line-height:18px;text-align:center;margin-bottom:2px}
.taskbar{height:40px;background:linear-gradient(90deg,#251b21 0,#20202b 30%,#2b1a3b 34%,#231d38 38%,#1b1e2b 45%,#202224 51%,#2a1a32 54%,#201c31 58%,#171d38 64%,#151c3a 72%,#20242e 80%,#1c2c32 90%,#241d31 100%);display:flex;color:#fff;flex:none}
.start{width:48px;display:flex;align-items:center;justify-content:center}
.tsearch{width:343px;background:#333;border:1px solid #585858;display:flex;align-items:center;padding-left:12px;color:#cfcfcf;font-size:14px;letter-spacing:-.1px}
.tsearch svg{margin-right:10px}
.tv{width:51px;display:flex;align-items:center;justify-content:center}
.app{width:49px;display:flex;align-items:center;justify-content:center;background-repeat:no-repeat;flex:none}
.pc{font:700 8.500px "Liberation Sans",Arial,sans-serif;fill:#fff}
.ul{background-image:linear-gradient(#aaa6ed,#aaa6ed);background-position:4px 38px;background-size:41px 2px}
.dual{background-image:linear-gradient(90deg,#aaa6ed 77%,#6d6aa3 77%)}
.cur{background:linear-gradient(#aaa6ed,#aaa6ed) 0 38px/49px 2px no-repeat,#4a4c65}
.eng{width:40px;text-align:center;line-height:40px;font-size:12px;letter-spacing:-.3px}
.clock{width:66px;display:flex;flex-direction:column;align-items:center;font-size:12px;line-height:18px;padding-top:2px;letter-spacing:-.5px}
```
